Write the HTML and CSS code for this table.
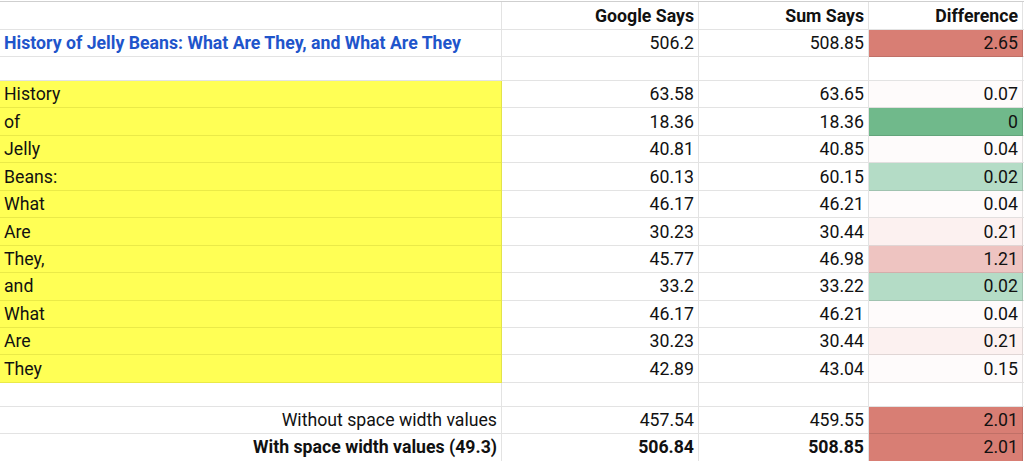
FILE: index.html
```html
<!DOCTYPE html>
<html>
<head>
<meta charset="utf-8">
<link rel="stylesheet" href="styles.css">
</head>
<body>
<div class="sheet">
  <div class="row r-head">
    <div class="cell"></div>
    <div class="cell num b">Google Says</div>
    <div class="cell num b">Sum Says</div>
    <div class="cell num b">Difference</div>
    <div class="cell edge"></div>
  </div>
  <div class="row r-norm">
    <div class="cell title">History of Jelly Beans: What Are They, and What Are They</div>
    <div class="cell num">506.2</div>
    <div class="cell num">508.85</div>
    <div class="cell num red">2.65</div>
    <div class="cell edge"></div>
  </div>
  <div class="row r-gap">
    <div class="cell"></div><div class="cell"></div><div class="cell"></div><div class="cell"></div><div class="cell edge"></div>
  </div>
  <div class="row r-word"><div class="cell word">History</div><div class="cell num">63.58</div><div class="cell num">63.65</div><div class="cell num w1">0.07</div><div class="cell edge"></div></div>
  <div class="row r-word"><div class="cell word">of</div><div class="cell num">18.36</div><div class="cell num">18.36</div><div class="cell num green">0</div><div class="cell edge"></div></div>
  <div class="row r-word"><div class="cell word">Jelly</div><div class="cell num">40.81</div><div class="cell num">40.85</div><div class="cell num w1">0.04</div><div class="cell edge"></div></div>
  <div class="row r-word"><div class="cell word">Beans:</div><div class="cell num">60.13</div><div class="cell num">60.15</div><div class="cell num lgreen">0.02</div><div class="cell edge"></div></div>
  <div class="row r-word"><div class="cell word">What</div><div class="cell num">46.17</div><div class="cell num">46.21</div><div class="cell num w1">0.04</div><div class="cell edge"></div></div>
  <div class="row r-word"><div class="cell word">Are</div><div class="cell num">30.23</div><div class="cell num">30.44</div><div class="cell num w2">0.21</div><div class="cell edge"></div></div>
  <div class="row r-word"><div class="cell word">They,</div><div class="cell num">45.77</div><div class="cell num">46.98</div><div class="cell num pink">1.21</div><div class="cell edge"></div></div>
  <div class="row r-word"><div class="cell word">and</div><div class="cell num">33.2</div><div class="cell num">33.22</div><div class="cell num lgreen">0.02</div><div class="cell edge"></div></div>
  <div class="row r-word"><div class="cell word">What</div><div class="cell num">46.17</div><div class="cell num">46.21</div><div class="cell num w1">0.04</div><div class="cell edge"></div></div>
  <div class="row r-word"><div class="cell word">Are</div><div class="cell num">30.23</div><div class="cell num">30.44</div><div class="cell num w2">0.21</div><div class="cell edge"></div></div>
  <div class="row r-word"><div class="cell word">They</div><div class="cell num">42.89</div><div class="cell num">43.04</div><div class="cell num w1">0.15</div><div class="cell edge"></div></div>
  <div class="row r-gap">
    <div class="cell"></div><div class="cell"></div><div class="cell"></div><div class="cell"></div><div class="cell edge"></div>
  </div>
  <div class="row r-norm">
    <div class="cell num">Without space width values</div>
    <div class="cell num">457.54</div>
    <div class="cell num">459.55</div>
    <div class="cell num red">2.01</div>
    <div class="cell edge"></div>
  </div>
  <div class="row r-last">
    <div class="cell num b">With space width values (49.3)</div>
    <div class="cell num b">506.84</div>
    <div class="cell num b">508.85</div>
    <div class="cell num red">2.01</div>
    <div class="cell edge"></div>
  </div>
</div>
</body>
</html>
```

FILE: styles.css
```css
html, body {
  margin: 0;
  padding: 0;
  background: #ffffff;
}
body {
  font-family: Roboto, "Liberation Sans", Arial, sans-serif;
  font-size: 17.7px;
  color: #111;
  overflow: hidden;
}
.sheet {
  width: 1024px;
  padding-top: 1px;
}
.row {
  display: grid;
  grid-template-columns: 502px 197px 170px 154px 1px;
}
.r-head { height: 28px; border-top: 1px solid #cfcfcf; }
.r-norm { height: 27px; }
.r-gap { height: 24px; }
.r-word { height: 27.45px; }
.r-last { height: 28px; }
.cell {
  box-sizing: border-box;
  border-right: 1px solid rgba(0, 0, 0, 0.11);
  border-bottom: 1px solid rgba(0, 0, 0, 0.11);
  display: flex;
  align-items: center;
  padding: 2px 4px 0 4px;
  white-space: nowrap;
  overflow: hidden;
  line-height: 1;
}
.edge {
  border-right: none;
  padding: 0;
}
.num { justify-content: flex-end; }
.b { font-weight: 700; }
.title {
  font-weight: 700;
  color: #1f55cb;
}
.word {
  background: #ffff55;
  border-bottom-color: rgba(120, 120, 0, 0.15);
}
.red { background: #d87e74; }
.green { background: #70b98b; }
.lgreen { background: #b4dcc6; }
.pink { background: #eec4c1; }
.w1 { background: #fefbfb; }
.w2 { background: #fcf1f0; }
```
